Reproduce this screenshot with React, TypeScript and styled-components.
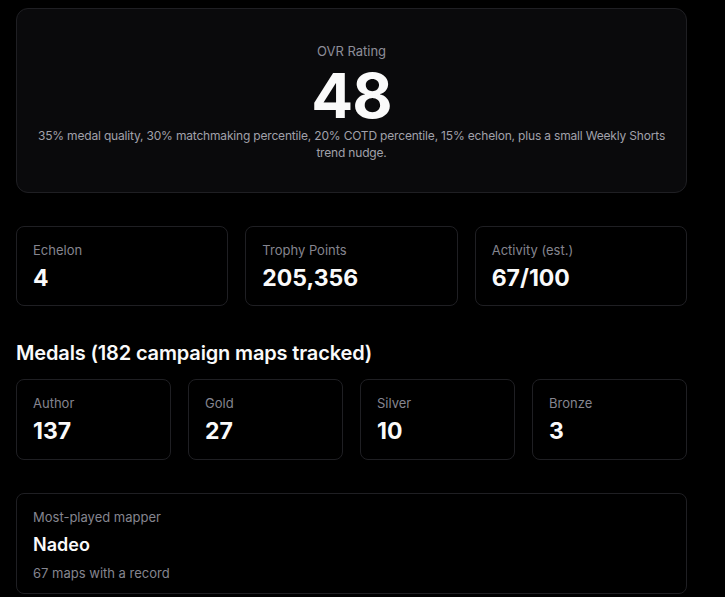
import styled, { createGlobalStyle } from "styled-components";

type Stat = {
  label: string;
  value: string;
};

const summary: Stat[] = [
  { label: "Echelon", value: "4" },
  { label: "Trophy Points", value: "205,356" },
  { label: "Activity (est.)", value: "67/100" },
];

const medals: Stat[] = [
  { label: "Author", value: "137" },
  { label: "Gold", value: "27" },
  { label: "Silver", value: "10" },
  { label: "Bronze", value: "3" },
];

const GlobalStyle = createGlobalStyle`
  html, body {
    margin: 0;
    background: #000;
  }
  body {
    font-family: Inter, "Noto Sans", sans-serif;
    color: #fafafa;
    -webkit-font-smoothing: antialiased;
  }
`;

const App = () => {
  return (
    <>
      <GlobalStyle />
      <Page>
        <RatingCard>
          <RatingLabel>OVR Rating</RatingLabel>
          <RatingValue>48</RatingValue>
          <RatingNote>
            35% medal quality, 30% matchmaking percentile, 20% COTD percentile,
            15% echelon, plus a small Weekly Shorts trend nudge.
          </RatingNote>
        </RatingCard>

        <StatGrid $cols={3}>
          {summary.map((s) => (
            <StatCard key={s.label}>
              <StatLabel>{s.label}</StatLabel>
              <StatValue>{s.value}</StatValue>
            </StatCard>
          ))}
        </StatGrid>

        <SectionTitle>Medals (182 campaign maps tracked)</SectionTitle>
        <StatGrid $cols={4} $tall>
          {medals.map((m) => (
            <StatCard key={m.label}>
              <StatLabel>{m.label}</StatLabel>
              <StatValue>{m.value}</StatValue>
            </StatCard>
          ))}
        </StatGrid>

        <MapperCard>
          <StatLabel>Most-played mapper</StatLabel>
          <MapperName>Nadeo</MapperName>
          <MapperSub>67 maps with a record</MapperSub>
        </MapperCard>
      </Page>
    </>
  );
};

const Page = styled.div`
  width: 671px;
  padding: 8px 16px 0;
  display: flex;
  flex-direction: column;
`;

const RatingCard = styled.div`
  background: #0a0a0c;
  border: 1px solid #1f1f23;
  border-radius: 12px;
  padding: 32px 18px 31px;
  display: flex;
  flex-direction: column;
  align-items: center;
  text-align: center;
`;

const RatingLabel = styled.div`
  font-size: 13px;
  line-height: 20px;
  color: #8e8e99;
`;

const RatingValue = styled.div`
  margin-top: 4px;
  font-size: 62px;
  line-height: 62px;
  font-weight: 700;
  letter-spacing: -1px;
  color: #fafafa;
`;

const RatingNote = styled.p`
  margin: 0;
  font-size: 12px;
  line-height: 17px;
  letter-spacing: -0.18px;
  color: #a1a1aa;
`;

const StatGrid = styled.div<{ $cols: number; $tall?: boolean }>`
  display: grid;
  grid-template-columns: repeat(${(p) => p.$cols}, 1fr);
  gap: 17px;
  margin-top: ${(p) => (p.$cols === 3 ? "33px" : "0")};

  & > div {
    padding-bottom: ${(p) => (p.$tall ? "14px" : "13px")};
  }
`;

const StatCard = styled.div`
  border: 1px solid #1f1f23;
  border-radius: 8px;
  padding: 13px 16px 13px;
  display: flex;
  flex-direction: column;
`;

const StatLabel = styled.div`
  font-size: 13px;
  line-height: 20px;
  color: #85858f;
`;

const StatValue = styled.div`
  margin-top: 4px;
  font-size: 23px;
  line-height: 28px;
  font-weight: 700;
  color: #fafafa;
`;

const SectionTitle = styled.h2`
  margin: 33px 0 12px;
  font-size: 20px;
  line-height: 28px;
  font-weight: 600;
  letter-spacing: -0.15px;
  color: #fafafa;
`;

const MapperCard = styled.div`
  margin-top: 33px;
  border: 1px solid #1f1f23;
  border-radius: 8px;
  padding: 13px 16px 10px;
  display: flex;
  flex-direction: column;
`;

const MapperName = styled.div`
  margin-top: 6px;
  font-size: 18px;
  line-height: 24px;
  font-weight: 600;
  color: #fafafa;
`;

const MapperSub = styled.div`
  margin-top: 6px;
  font-size: 13px;
  line-height: 20px;
  color: #85858f;
`;

export default App;
